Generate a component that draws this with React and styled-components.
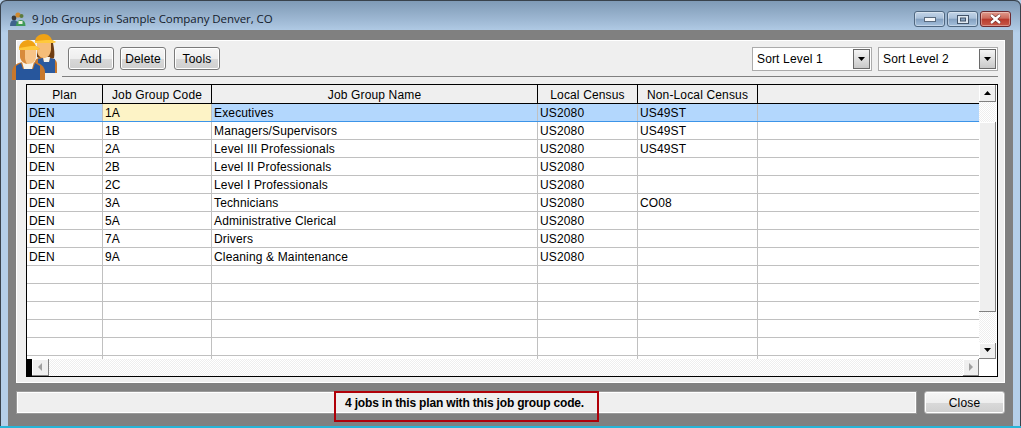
import React from "react";
import styled, { createGlobalStyle } from "styled-components";

const columns = [76, 109, 326, 100, 120, 221];
const headers = ["Plan", "Job Group Code", "Job Group Name", "Local Census", "Non-Local Census", ""];
const jobGroups = [
  ["DEN", "1A", "Executives", "US2080", "US49ST", ""],
  ["DEN", "1B", "Managers/Supervisors", "US2080", "US49ST", ""],
  ["DEN", "2A", "Level III Professionals", "US2080", "US49ST", ""],
  ["DEN", "2B", "Level II Professionals", "US2080", "", ""],
  ["DEN", "2C", "Level I Professionals", "US2080", "", ""],
  ["DEN", "3A", "Technicians", "US2080", "CO08", ""],
  ["DEN", "5A", "Administrative Clerical", "US2080", "", ""],
  ["DEN", "7A", "Drivers", "US2080", "", ""],
  ["DEN", "9A", "Cleaning & Maintenance", "US2080", "", ""],
  ["", "", "", "", "", ""],
  ["", "", "", "", "", ""],
  ["", "", "", "", "", ""],
  ["", "", "", "", "", ""],
  ["", "", "", "", "", ""],
];

const GlobalStyle = createGlobalStyle`
  html, body {
    margin: 0;
    padding: 0;
    background: #b5cfe9;
    overflow: hidden;
  }
  body {
    font-family: "Liberation Sans", Arial, sans-serif;
    font-size: 12px;
    letter-spacing: 0.15px;
    color: #000;
  }
`;

const Window = styled.div`
  width: 1021px;
  height: 428px;
  box-sizing: border-box;
  display: flex;
  flex-direction: column;
  padding: 0 8px;
  border-radius: 6px 6px 0 0;
  border-top: 1px solid #39424c;
  border-bottom: 2px solid #27b5d8;
  background: linear-gradient(#7f9ab6 0, #a3bdd8 22px, #b5cfe9 32px);
  box-shadow: inset 1px 0 0 #39424c, inset -1px 0 0 #39424c;
`;

const TitleBar = styled.div`
  height: 29px;
  display: flex;
  align-items: flex-start;
  gap: 6px;
  padding: 10px 0 0 2px;
  box-sizing: border-box;
`;

const Title = styled.span`
  font-family: "Open Sans", "Liberation Sans", sans-serif;
  font-size: 11.5px;
  letter-spacing: -0.05px;
  line-height: 16px;
  color: #14202c;
  white-space: nowrap;
`;

const WindowControls = styled.div`
  margin-left: auto;
  margin-right: 2px;
  display: flex;
  gap: 2px;
  align-items: flex-start;
`;

const WindowButton = styled.div`
  width: 31px;
  height: 16px;
  box-sizing: border-box;
  border: 1px solid ${(p) => (p.$close ? "#6e2a30" : "#4f6780")};
  border-radius: 3px;
  display: flex;
  align-items: center;
  justify-content: center;
  background: ${(p) =>
    p.$close
      ? "linear-gradient(#e09a8c 0, #cd6a5c 45%, #b8392c 50%, #c85a4a 100%)"
      : "linear-gradient(#c3d5e8 0, #a9c0d9 45%, #83a0c0 50%, #a5c0dc 100%)"};
  box-shadow: inset 0 0 0 1px rgba(255, 255, 255, 0.35);
`;

const Frame = styled.div`
  flex: 1;
  background: #808080;
  display: flex;
  flex-direction: column;
  padding: 10px 8px 5px;
  min-height: 0;
`;

const Panel = styled.div`
  height: 343px;
  box-sizing: border-box;
  background: #efefef;
  border: 1px solid #fff;
  position: relative;
  display: flex;
  flex-direction: column;
  padding: 6px 6px 5px 9px;
`;

const WorkersIcon = styled.svg`
  position: absolute;
  left: -7px;
  top: -8px;
`;

const Toolbar = styled.div`
  display: flex;
  align-items: flex-start;
  height: 29px;
  margin-left: 36px;
  padding-left: 6px;
  border-bottom: 1px solid #808080;
`;

const ToolButton = styled.button`
  height: 23px;
  width: ${(p) => p.$w}px;
  margin-right: ${(p) => p.$gap}px;
  padding: 0;
  box-sizing: border-box;
  border: 1px solid #7a7a7a;
  border-radius: 3px;
  background: linear-gradient(#f6f6f6 0, #eeeeee 50%, #d9d9d9 52%, #cfcfcf 100%);
  box-shadow: inset 0 0 0 1px #fff;
  font-family: inherit;
  font-size: 12px;
  letter-spacing: inherit;
  color: #000;
`;

const SortGroup = styled.div`
  margin-left: auto;
  display: flex;
  gap: 6px;
`;

const SortBox = styled.div`
  width: 120px;
  height: 24px;
  box-sizing: border-box;
  border: 1px solid #ababab;
  background: #fff;
  display: flex;
  align-items: center;
  padding: 0 1px 0 4px;
  justify-content: space-between;
`;

const SortArrow = styled.div`
  width: 17px;
  height: 20px;
  box-sizing: border-box;
  border: 1px solid #6a6a6a;
  background: linear-gradient(#f5f5f5, #c9c9c9);
  display: flex;
  align-items: center;
  justify-content: center;
`;

const Table = styled.div`
  margin-top: 7px;
  width: 972px;
  height: 294px;
  box-sizing: border-box;
  border: 1px solid #000;
  background: #fff;
  display: flex;
`;

const TableMain = styled.div`
  width: 952px;
  display: flex;
  flex-direction: column;
`;

const HeaderRow = styled.div`
  display: flex;
  height: 19px;
  box-sizing: border-box;
  border-bottom: 1px solid #000;
  background: #efefef;
`;

const HeaderCell = styled.div`
  width: ${(p) => p.$w}px;
  box-sizing: border-box;
  border-right: ${(p) => (p.$last ? "none" : "1px solid #000")};
  text-align: center;
  padding-top: 1px;
  line-height: 18px;
  white-space: nowrap;
`;

const Row = styled.div`
  display: flex;
  height: 18px;
  box-sizing: border-box;
  border-bottom: 1px solid ${(p) => (p.$selected ? "#3c94e8" : "#c0c0c0")};
  background: ${(p) => (p.$selected ? "#b3d7fd" : "#fff")};
`;

const Cell = styled.div`
  width: ${(p) => p.$w}px;
  box-sizing: border-box;
  border-right: ${(p) => (p.$last ? "none" : "1px solid #c0c0c0")};
  padding: 1px 0 0 2px;
  line-height: 16px;
  white-space: nowrap;
  background: ${(p) => (p.$active ? "#fdf3c6" : "transparent")};
`;

const RowStub = styled(Row)`
  height: 3px;
  border-bottom: none;
`;

const Dither = styled.div`
  background-color: #fff;
  background-image: repeating-conic-gradient(#eeeeee 0 25%, #fff 0 50%);
  background-size: 2px 2px;
`;

const HScroll = styled(Dither)`
  height: 17px;
  display: flex;
  justify-content: space-between;
`;

const HScrollStart = styled.div`
  display: flex;
`;

const BlackBlock = styled.div`
  width: 5px;
  background: #000;
`;

const VScroll = styled.div`
  width: 18px;
  display: flex;
  flex-direction: column;
  padding-right: 1px;
  box-sizing: border-box;
`;

const ScrollButton = styled.div`
  width: ${(p) => p.$w || 17}px;
  height: ${(p) => p.$h || 17}px;
  box-sizing: border-box;
  flex: none;
  background: #efefef;
  border-right: 1px solid #808080;
  border-bottom: 1px solid #808080;
  box-shadow: inset 1px 1px 0 #fff;
  display: flex;
  align-items: center;
  justify-content: center;
`;

const VTrack = styled(Dither)`
  height: ${(p) => p.$h}px;
  flex: none;
`;

const BottomBar = styled.div`
  display: flex;
  gap: 7px;
  margin-top: 8px;
`;

const StatusBar = styled.div`
  width: 901px;
  height: 23px;
  box-sizing: border-box;
  padding-right: 4px;
  background: #efefef;
  border: 1px solid #fff;
  outline: 1px solid #9a9a9a;
  outline-offset: -1px;
  position: relative;
  display: flex;
  align-items: center;
  justify-content: center;
  font-weight: bold;
  letter-spacing: -0.17px;
  white-space: nowrap;
  box-shadow: inset 0 0 0 1px #fff;
`;

const Callout = styled.div`
  position: absolute;
  left: 317px;
  top: -1px;
  width: 265px;
  height: 31px;
  box-sizing: border-box;
  border: 2px solid #b00008;
`;

const CloseButton = styled(ToolButton)`
  width: 81px;
  height: 23px;
  border-color: #b5b5b5;
  margin: 0;
`;

const Arrow = ({ dir, color = "#000" }) => {
  const points = {
    up: "0,4 7,4 3.5,0",
    down: "0,0 7,0 3.5,4",
    left: "4,0 4,8 0,4",
    right: "0,0 0,8 4,4",
  };
  const vertical = dir === "up" || dir === "down";
  return (
    <svg width={vertical ? 7 : 4} height={vertical ? 4 : 8}>
      <polygon points={points[dir]} fill={color} />
    </svg>
  );
};

const App = () => (
  <>
    <GlobalStyle />
    <Window>
      <TitleBar>
        <svg width="16" height="16" viewBox="0 0 16 16">
          <circle cx="4" cy="7" r="2.4" fill="#3a3a3a" />
          <circle cx="8" cy="4" r="2.6" fill="#d08a30" />
          <circle cx="11.5" cy="5" r="2" fill="#5c7a3c" />
          <path d="M0 15c0-4 1.500-6 4-6s4 2 4 6z" fill="#3e628c" />
          <path d="M6 15c0-4 2-6 5-6s4.500 2 4.500 6z" fill="#3f9a58" />
          <path d="M8.500 10h4v3h-4z" fill="#e8f0e0" />
        </svg>
        <Title>9 Job Groups in Sample Company Denver, CO</Title>
        <WindowControls>
          <WindowButton>
            <svg width="12" height="5">
              <rect x="0.5" y="0.5" width="11" height="4" fill="#f4f7fa" stroke="#5a6b7e" />
            </svg>
          </WindowButton>
          <WindowButton>
            <svg width="12" height="9">
              <rect x="0.5" y="0.5" width="11" height="8" fill="#dfe8f1" stroke="#44556a" />
              <rect x="3.5" y="3" width="5" height="3" fill="#8aa6c4" stroke="#44556a" />
            </svg>
          </WindowButton>
          <WindowButton $close>
            <svg width="13" height="10" viewBox="0 0 13 10">
              <path d="M2 1l9 8M11 1l-9 8" stroke="#5b1d1a" strokeWidth="3.6" />
              <path d="M2 1l9 8M11 1l-9 8" stroke="#fff" strokeWidth="2.4" />
            </svg>
          </WindowButton>
        </WindowControls>
      </TitleBar>
      <Frame>
        <Panel>
          <WorkersIcon width="47" height="47" viewBox="0 0 47 47">
            {/* rear worker */}
            <path d="M27 10h16c1 5 2 11 1 15l-9 3-8-4z" fill="#6e3d12" />
            <path d="M25 40V29c0-3 4-5 8-5h3c5 0 11 2 11 7v9z" fill="#c8782c" />
            <path d="M28 40V26l5-1 1 4h5l1-4 5 1v14z" fill="#2c5a9e" />
            <path d="M33 24h7l-1 5h-5z" fill="#f6f3ec" />
            <path d="M27 9h14v8c-1 6-4 8-7 8-5 0-7-4-7-8z" fill="#f6bd78" />
            <path d="M25 9c0-5 4-8 9-8 4 0 7 3 8 6l4 2-4 1H25z" fill="#f0a214" />
            <path d="M25 8l11-1 6 0 4 2-3 1H25z" fill="#ffc93c" />
            {/* front worker */}
            <path d="M2 47v-8c0-6 6-10 12-10h8c7 0 13 4 13 10v8z" fill="#c8782c" />
            <path d="M6 47V33l5-3 2 6h10l2-6 5 3v14z" fill="#27569c" />
            <path d="M12 29h12l-2 7h-8z" fill="#f6f3ec" />
            <path d="M10 17h16v6c0 5-3 8-8 8-5 0-8-4-8-9z" fill="#f8c488" />
            <path d="M10 17h5v8c0 2 1 4 2 6-4-1-7-4-7-8z" fill="#d88a3c" />
            <path d="M9 16c0-5 4-9 9-9 4 0 7 3 8 6l4 3-4 1H9z" fill="#f0a214" />
            <path d="M9 15l12-2 5 0 4 3-4 1H9z" fill="#ffc93c" />
          </WorkersIcon>
          <Toolbar>
            <ToolButton $w={46} $gap={6}>Add</ToolButton>
            <ToolButton $w={46} $gap={8}>Delete</ToolButton>
            <ToolButton $w={46} $gap={0}>Tools</ToolButton>
            <SortGroup>
              {["Sort Level 1", "Sort Level 2"].map((label) => (
                <SortBox key={label}>
                  {label}
                  <SortArrow>
                    <Arrow dir="down" />
                  </SortArrow>
                </SortBox>
              ))}
            </SortGroup>
          </Toolbar>
          <Table>
            <TableMain>
              <HeaderRow>
                {headers.map((h, i) => (
                  <HeaderCell key={i} $w={columns[i]} $last={i === 5}>
                    {h}
                  </HeaderCell>
                ))}
              </HeaderRow>
              {jobGroups.map((row, r) => (
                <Row key={r} $selected={r === 0}>
                  {row.map((value, i) => (
                    <Cell key={i} $w={columns[i]} $last={i === 5} $active={r === 0 && i === 1}>
                      {value}
                    </Cell>
                  ))}
                </Row>
              ))}
              <RowStub>
                {columns.map((w, i) => (
                  <Cell key={i} $w={w} $last={i === 5} />
                ))}
              </RowStub>
              <HScroll>
                <HScrollStart>
                  <BlackBlock />
                  <ScrollButton $w={17}>
                    <Arrow dir="left" color="#a0a0a0" />
                  </ScrollButton>
                </HScrollStart>
                <ScrollButton $w={16}>
                  <Arrow dir="right" color="#a0a0a0" />
                </ScrollButton>
              </HScroll>
            </TableMain>
            <VScroll>
              <ScrollButton>
                <Arrow dir="up" />
              </ScrollButton>
              <VTrack $h={20} />
              <ScrollButton $h={190} />
              <VTrack $h={31} />
              <ScrollButton $h={16}>
                <Arrow dir="down" />
              </ScrollButton>
            </VScroll>
          </Table>
        </Panel>
        <BottomBar>
          <StatusBar>
            4 jobs in this plan with this job group code.
            <Callout />
          </StatusBar>
          <CloseButton $w={81} $gap={0}>Close</CloseButton>
        </BottomBar>
      </Frame>
    </Window>
  </>
);

export default App;
